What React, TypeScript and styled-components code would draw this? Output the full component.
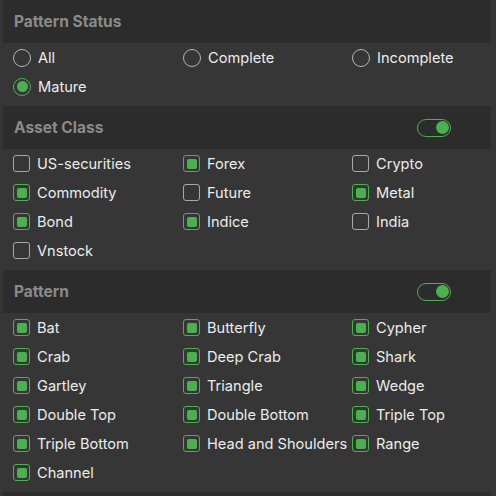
import React from 'react';
import styled, { createGlobalStyle } from 'styled-components';

const GlobalStyle = createGlobalStyle`
    html, body {
        margin: 0;
        padding: 0;
        background: #363636;
    }
    body {
        font-family: Inter, "Liberation Sans", sans-serif;
        -webkit-font-smoothing: antialiased;
    }
`;

const Panel = styled.div`
    width: 496px;
    height: 496px;
    overflow: hidden;
    background: #363636;
`;

const SectionHeader = styled.div`
    height: 43px;
    margin: 0 5px 0 3px;
    padding: 0 40px 0 11px;
    background: #2c2c2c;
    display: flex;
    align-items: center;
    justify-content: space-between;
`;

const SectionTitle = styled.h3`
    margin: 0;
    font-size: 15.5px;
    font-weight: 700;
    color: #8a8a8a;
`;

const Options = styled.div`
    display: grid;
    grid-template-columns: 170px 169px 1fr;
    grid-auto-rows: 29px;
    padding: 0 0 5px 13px;
`;

const Option = styled.label`
    display: flex;
    align-items: center;
    gap: 7px;
    font-size: 14.6px;
    color: #ececec;
    white-space: nowrap;
`;

const RadioMark = styled.span<{ $on: boolean }>`
    box-sizing: border-box;
    width: 18px;
    height: 18px;
    border-radius: 50%;
    border: 1.5px solid ${({ $on }) => ($on ? '#4caf50' : '#b4b4b4')};
    display: flex;
    align-items: center;
    justify-content: center;
    flex-shrink: 0;

    &::after {
        content: '';
        width: 11px;
        height: 11px;
        border-radius: 50%;
        background: #4caf50;
        display: ${({ $on }) => ($on ? 'block' : 'none')};
    }
`;

const CheckMark = styled.span<{ $on: boolean }>`
    box-sizing: border-box;
    width: 17px;
    height: 17px;
    border-radius: 3px;
    border: 1px solid ${({ $on }) => ($on ? '#4caf50' : '#a8a8a8')};
    display: flex;
    align-items: center;
    justify-content: center;
    flex-shrink: 0;

    &::after {
        content: '';
        width: 10px;
        height: 10px;
        border-radius: 2px;
        background: #4caf50;
        display: ${({ $on }) => ($on ? 'block' : 'none')};
    }
`;

const Toggle = styled.span<{ $on: boolean }>`
    box-sizing: border-box;
    width: 34px;
    height: 18px;
    border-radius: 9px;
    border: 1.5px solid #4caf50;
    display: flex;
    align-items: center;
    justify-content: ${({ $on }) => ($on ? 'flex-end' : 'flex-start')};
    padding: 0 1.5px;

    &::after {
        content: '';
        width: 13px;
        height: 13px;
        border-radius: 50%;
        background: #4caf50;
    }
`;

const statuses = [
    { name: 'All', on: false },
    { name: 'Complete', on: false },
    { name: 'Incomplete', on: false },
    { name: 'Mature', on: true },
];

const assets = [
    { name: 'US-securities', on: false },
    { name: 'Forex', on: true },
    { name: 'Crypto', on: false },
    { name: 'Commodity', on: true },
    { name: 'Future', on: false },
    { name: 'Metal', on: true },
    { name: 'Bond', on: true },
    { name: 'Indice', on: true },
    { name: 'India', on: false },
    { name: 'Vnstock', on: false },
];

const patterns = [
    'Bat', 'Butterfly', 'Cypher',
    'Crab', 'Deep Crab', 'Shark',
    'Gartley', 'Triangle', 'Wedge',
    'Double Top', 'Double Bottom', 'Triple Top',
    'Triple Bottom', 'Head and Shoulders', 'Range',
    'Channel',
];

const App: React.FC = () => {
    return (
        <Panel>
            <GlobalStyle />

            <SectionHeader>
                <SectionTitle>Pattern Status</SectionTitle>
            </SectionHeader>
            <Options>
                {statuses.map(s => (
                    <Option key={s.name}>
                        <RadioMark $on={s.on} />
                        {s.name}
                    </Option>
                ))}
            </Options>

            <SectionHeader>
                <SectionTitle>Asset Class</SectionTitle>
                <Toggle $on />
            </SectionHeader>
            <Options>
                {assets.map(a => (
                    <Option key={a.name}>
                        <CheckMark $on={a.on} />
                        {a.name}
                    </Option>
                ))}
            </Options>

            <SectionHeader>
                <SectionTitle>Pattern</SectionTitle>
                <Toggle $on />
            </SectionHeader>
            <Options>
                {patterns.map(p => (
                    <Option key={p}>
                        <CheckMark $on />
                        {p}
                    </Option>
                ))}
            </Options>

            <SectionHeader />
        </Panel>
    );
};

export default App;
